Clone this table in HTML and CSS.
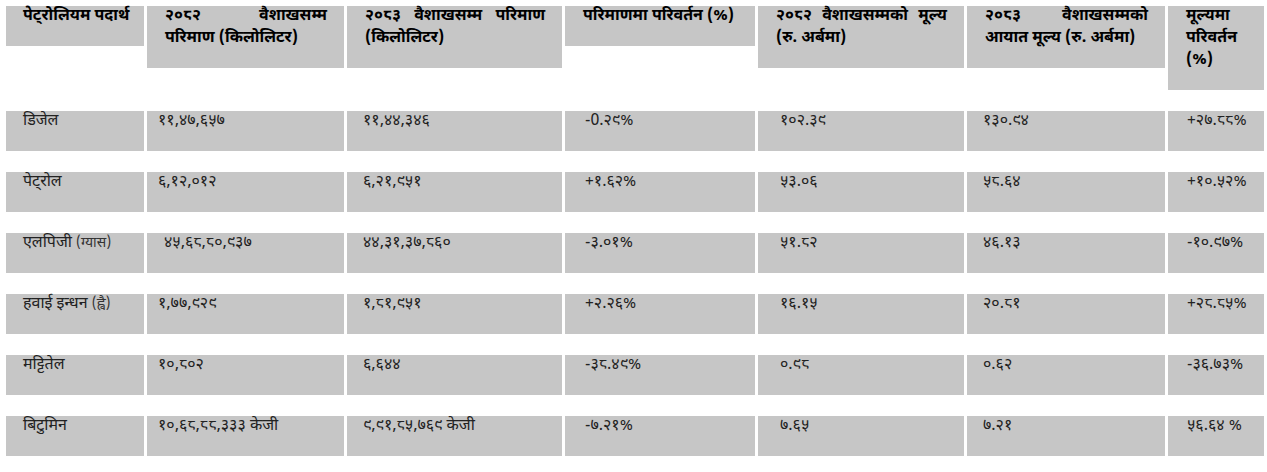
FILE: index.html
```html
<!DOCTYPE html>
<html lang="ne">
<head>
<meta charset="utf-8">
<title>पेट्रोलियम पदार्थ आयात</title>
<link rel="stylesheet" href="styles.css">
</head>
<body>
<div class="table">
  <div class="cell head c1"><p><span class="ln">पेट्रोलियम पदार्थ</span></p></div>
  <div class="cell head c2"><p><span class="ln j">२०८२ वैशाखसम्म</span><span class="ln">परिमाण (किलोलिटर)</span></p></div>
  <div class="cell head c3"><p><span class="ln j">२०८३ वैशाखसम्म परिमाण</span><span class="ln">(किलोलिटर)</span></p></div>
  <div class="cell head c4"><p><span class="ln">परिमाणमा परिवर्तन (%)</span></p></div>
  <div class="cell head c5"><p><span class="ln j">२०८२ वैशाखसम्मको मूल्य</span><span class="ln">(रु. अर्बमा)</span></p></div>
  <div class="cell head c6"><p><span class="ln j">२०८३ वैशाखसम्मको</span><span class="ln">आयात मूल्य (रु. अर्बमा)</span></p></div>
  <div class="cell head c7"><p><span class="ln">मूल्यमा</span><span class="ln">परिवर्तन</span><span class="ln">(%)</span></p></div>

  <div class="cell c1"><p>डिजेल</p></div>
  <div class="cell c2"><p>११,४७,६५७</p></div>
  <div class="cell c3"><p>११,४४,३४६</p></div>
  <div class="cell c4"><p>-0.२९%</p></div>
  <div class="cell c5"><p>१०२.३९</p></div>
  <div class="cell c6"><p>१३०.९४</p></div>
  <div class="cell c7"><p>+२७.८८%</p></div>

  <div class="cell c1"><p>पेट्रोल</p></div>
  <div class="cell c2"><p>६,१२,०१२</p></div>
  <div class="cell c3"><p>६,२१,९५१</p></div>
  <div class="cell c4"><p>+१.६२%</p></div>
  <div class="cell c5"><p>५३.०६</p></div>
  <div class="cell c6"><p>५८.६४</p></div>
  <div class="cell c7"><p>+१०.५२%</p></div>

  <div class="cell c1"><p>एलपिजी <span class="note">(ग्यास)</span></p></div>
  <div class="cell c2 wide"><p>४५,६८,८०,९३७</p></div>
  <div class="cell c3"><p>४४,३१,३७,८६०</p></div>
  <div class="cell c4"><p>-३.०१%</p></div>
  <div class="cell c5"><p>५१.८२</p></div>
  <div class="cell c6"><p>४६.१३</p></div>
  <div class="cell c7"><p>-१०.९७%</p></div>

  <div class="cell c1"><p>हवाई इन्धन <span class="note">(ह्वै)</span></p></div>
  <div class="cell c2"><p>१,७७,९२९</p></div>
  <div class="cell c3"><p>१,८१,९५१</p></div>
  <div class="cell c4"><p>+२.२६%</p></div>
  <div class="cell c5"><p>१६.१५</p></div>
  <div class="cell c6"><p>२०.८१</p></div>
  <div class="cell c7"><p>+२८.८५%</p></div>

  <div class="cell c1"><p>मट्टितेल</p></div>
  <div class="cell c2"><p>१०,८०२</p></div>
  <div class="cell c3"><p>६,६४४</p></div>
  <div class="cell c4"><p>-३८.४९%</p></div>
  <div class="cell c5"><p>०.९८</p></div>
  <div class="cell c6"><p>०.६२</p></div>
  <div class="cell c7"><p>-३६.७३%</p></div>

  <div class="cell c1"><p>बिटुमिन</p></div>
  <div class="cell c2"><p>१०,६८,८८,३३३ केजी</p></div>
  <div class="cell c3"><p>९,९१,८५,७६९ केजी</p></div>
  <div class="cell c4"><p>-७.२१%</p></div>
  <div class="cell c5"><p>७.६५</p></div>
  <div class="cell c6"><p>७.२१</p></div>
  <div class="cell c7"><p>५६.६४ %</p></div>
</div>
</body>
</html>
```

FILE: styles.css
```css
html, body {
  margin: 0;
  padding: 0;
  background: #ffffff;
}

body {
  padding: 6px 0 0 6px;
  font-family: "Noto Sans Devanagari", "Lohit Devanagari", "Noto Sans", sans-serif;
  color: #222222;
}

.table {
  display: grid;
  grid-template-columns: 138px 197px 215px 190px 206px 198px 96px;
  column-gap: 3px;
  row-gap: 21px;
  align-items: start;
}

.cell p {
  margin: 0;
  background: #c6c6c6;
  padding: 0 8px 18px 17px;
  font-size: 16px;
  line-height: 22px;
  white-space: nowrap;
}

.note {
  font-size: 14px;
  color: #333333;
}

.head p {
  font-weight: bold;
  font-size: 16px;
  color: #000;
  padding-right: 17px;
}

.ln {
  display: block;
  text-align: left;
}

.ln.j {
  text-align: justify;
  text-align-last: justify;
  white-space: normal;
}

.c2 p { padding-left: 11px; }
.c2.wide p { padding-left: 17px; }
.c3 p { padding-left: 16px; }
.c4 p { padding-left: 20px; }
.c5 p { padding-left: 22px; }
.c6 p { padding-left: 16px; }
.c7 p { padding-left: 19px; }

.head.c1 p { padding-left: 17px; }
.head.c2 p,
.head.c3 p,
.head.c4 p,
.head.c5 p,
.head.c6 p,
.head.c7 p { padding-left: 18px; }
```
